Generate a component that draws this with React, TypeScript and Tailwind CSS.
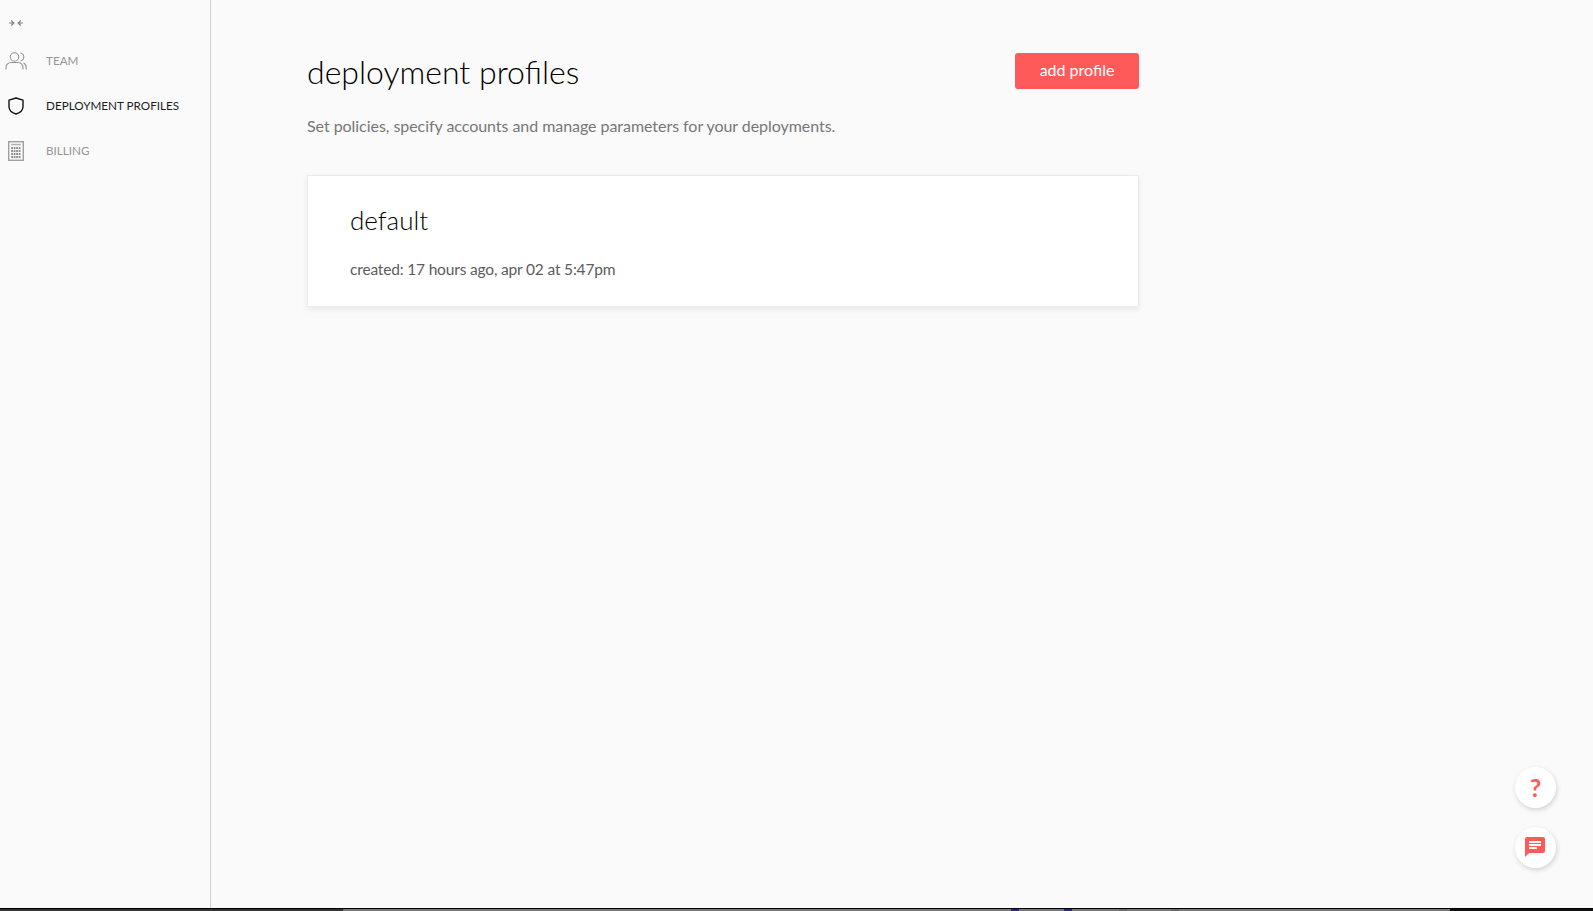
const font = "[font-family:Lato,'Liberation_Sans',sans-serif]";

function CollapseIcon() {
  return (
    <svg width="16" height="10" viewBox="0 0 16 10" fill="none" stroke="#808080" strokeWidth="1.1">
      <path d="M1 5h4.500M3.300 2.500 5.800 5 3.300 7.500" />
      <path d="M15 5h-4.500M12.700 2.500 10.200 5 12.700 7.500" />
    </svg>
  );
}

function TeamIcon() {
  return (
    <svg width="22" height="18" viewBox="0 0 22 18" fill="none" stroke="#949494" strokeWidth="1.1">
      <circle cx="9.500" cy="5" r="4.200" />
      <path d="M1 17.500v-2c0-2.800 2.400-5 5-5h7c2.700 0 5 2.200 5 5v2" />
      <path d="M15.500 1c2.300.7 3.300 2.200 3.300 4s-1 3.300-3.300 4" />
      <path d="M18.500 11c1.600.8 2.700 2.300 2.700 4.300v2.200" />
    </svg>
  );
}

function ShieldIcon() {
  return (
    <svg width="16" height="18" viewBox="0 0 16 18" fill="none" stroke="#111" strokeWidth="1.400" strokeLinejoin="round">
      <path d="M8 1 15 3.200V9.500C15 13.200 12 15.800 8 17 4 15.800 1 13.200 1 9.500V3.200Z" />
    </svg>
  );
}

function BillingIcon() {
  const cells = [];
  for (let r = 0; r < 4; r++) {
    for (let c = 0; c < 4; c++) {
      cells.push(<rect key={`${r}-${c}`} x={3.200 + c * 2.500} y={6 + r * 3} width="1.800" height="2.100" fill="#8f8f8f" />);
    }
  }
  return (
    <svg width="16" height="20" viewBox="0 0 16 20" fill="none">
      <rect x="0.700" y="0.700" width="14.600" height="18.600" stroke="#a0a0a0" strokeWidth="1.400" />
      <rect x="3.200" y="2.800" width="9.600" height="1.500" fill="#b0b0b0" />
      {cells}
    </svg>
  );
}

function NavItem({ icon, label, active }: { icon: React.ReactNode; label: string; active?: boolean }) {
  return (
    <div className="flex h-[45px] items-center">
      <div className="flex w-[32px] justify-center">{icon}</div>
      <span className={`ml-[14px] text-[11.700px] ${active ? "text-[#1c1c1c]" : "text-[#969696]"}`}>{label}</span>
    </div>
  );
}

export default function App() {
  return (
    <div className={`flex h-[911px] flex-col overflow-hidden bg-[#fafafa] ${font}`}>
      <div className="flex min-h-0 flex-1">
        <aside className="w-[211px] shrink-0 border-r border-[#cfcfcf]">
          <div className="flex h-[38px] w-[32px] items-end justify-center pb-[10px]">
            <CollapseIcon />
          </div>
          <nav className="flex flex-col">
            <NavItem icon={<TeamIcon />} label="TEAM" />
            <NavItem icon={<ShieldIcon />} label="DEPLOYMENT PROFILES" active />
            <NavItem icon={<BillingIcon />} label="BILLING" />
          </nav>
        </aside>
        <main className="relative flex-1 pl-[96px] pt-[53px]">
          <div className="w-[832px]">
            <div className="flex items-start justify-between">
              <h1 className="text-[32px] font-light leading-[38px] text-black">deployment profiles</h1>
              <button className="h-[36px] w-[124px] rounded-[3px] bg-[#ff5a5a] pb-[2px] text-[16px] text-white">add profile</button>
            </div>
            <p className="mt-[24px] text-[16px] leading-[22px] tracking-[-0.05px] text-[#777]">
              Set policies, specify accounts and manage parameters for your deployments.
            </p>
            <div className="mt-[38px] h-[132px] border border-[#ececec] bg-white pl-[42px] pt-[29px] shadow-[0_2px_6px_rgba(0,0,0,0.08)]">
              <h2 className="text-[26px] font-light leading-[30px] text-black">default</h2>
              <p className="mt-[23px] text-[15.500px] leading-[22px] tracking-[-0.17px] text-[#5c5c5c]">created: 17 hours ago, apr 02 at 5:47pm</p>
            </div>
          </div>
          <button className="absolute left-[1304px] top-[767px] flex h-[41px] w-[41px] items-center justify-center rounded-full bg-white text-[25px] font-bold text-[#ff5a5a] shadow-[1px_2px_5px_rgba(0,0,0,0.16)]">
            ?
          </button>
          <button className="absolute left-[1304px] top-[827px] flex h-[41px] w-[41px] items-center justify-center rounded-full bg-white pb-[1px] pr-[1px] shadow-[1px_2px_5px_rgba(0,0,0,0.16)]">
            <svg width="20" height="20" viewBox="0 0 20 20" fill="#ff5a5a">
              <path d="M2 0h16a2 2 0 0 1 2 2v12a2 2 0 0 1-2 2H4l-4 4V2a2 2 0 0 1 2-2Z" />
              <path d="M4 4h12v2H4zM4 7h12v2H4zM4 10h8v2H4z" fill="#fff" />
            </svg>
          </button>
        </main>
      </div>
      <div className="flex h-[3px] shrink-0 border-t border-black">
        <div className="w-[343px] bg-[#333]" />
        <div className="flex w-[1107px] bg-[#777]">
          <div className="ml-[668px] w-[8px] bg-[#2a2a70]" />
          <div className="ml-[45px] w-[8px] bg-[#2a2a70]" />
          <div className="ml-[47px] w-[8px] bg-[#6a6a6a]" />
          <div className="ml-[44px] w-[8px] bg-[#6a6a6a]" />
        </div>
        <div className="flex-1 bg-[#111]" />
      </div>
    </div>
  );
}
